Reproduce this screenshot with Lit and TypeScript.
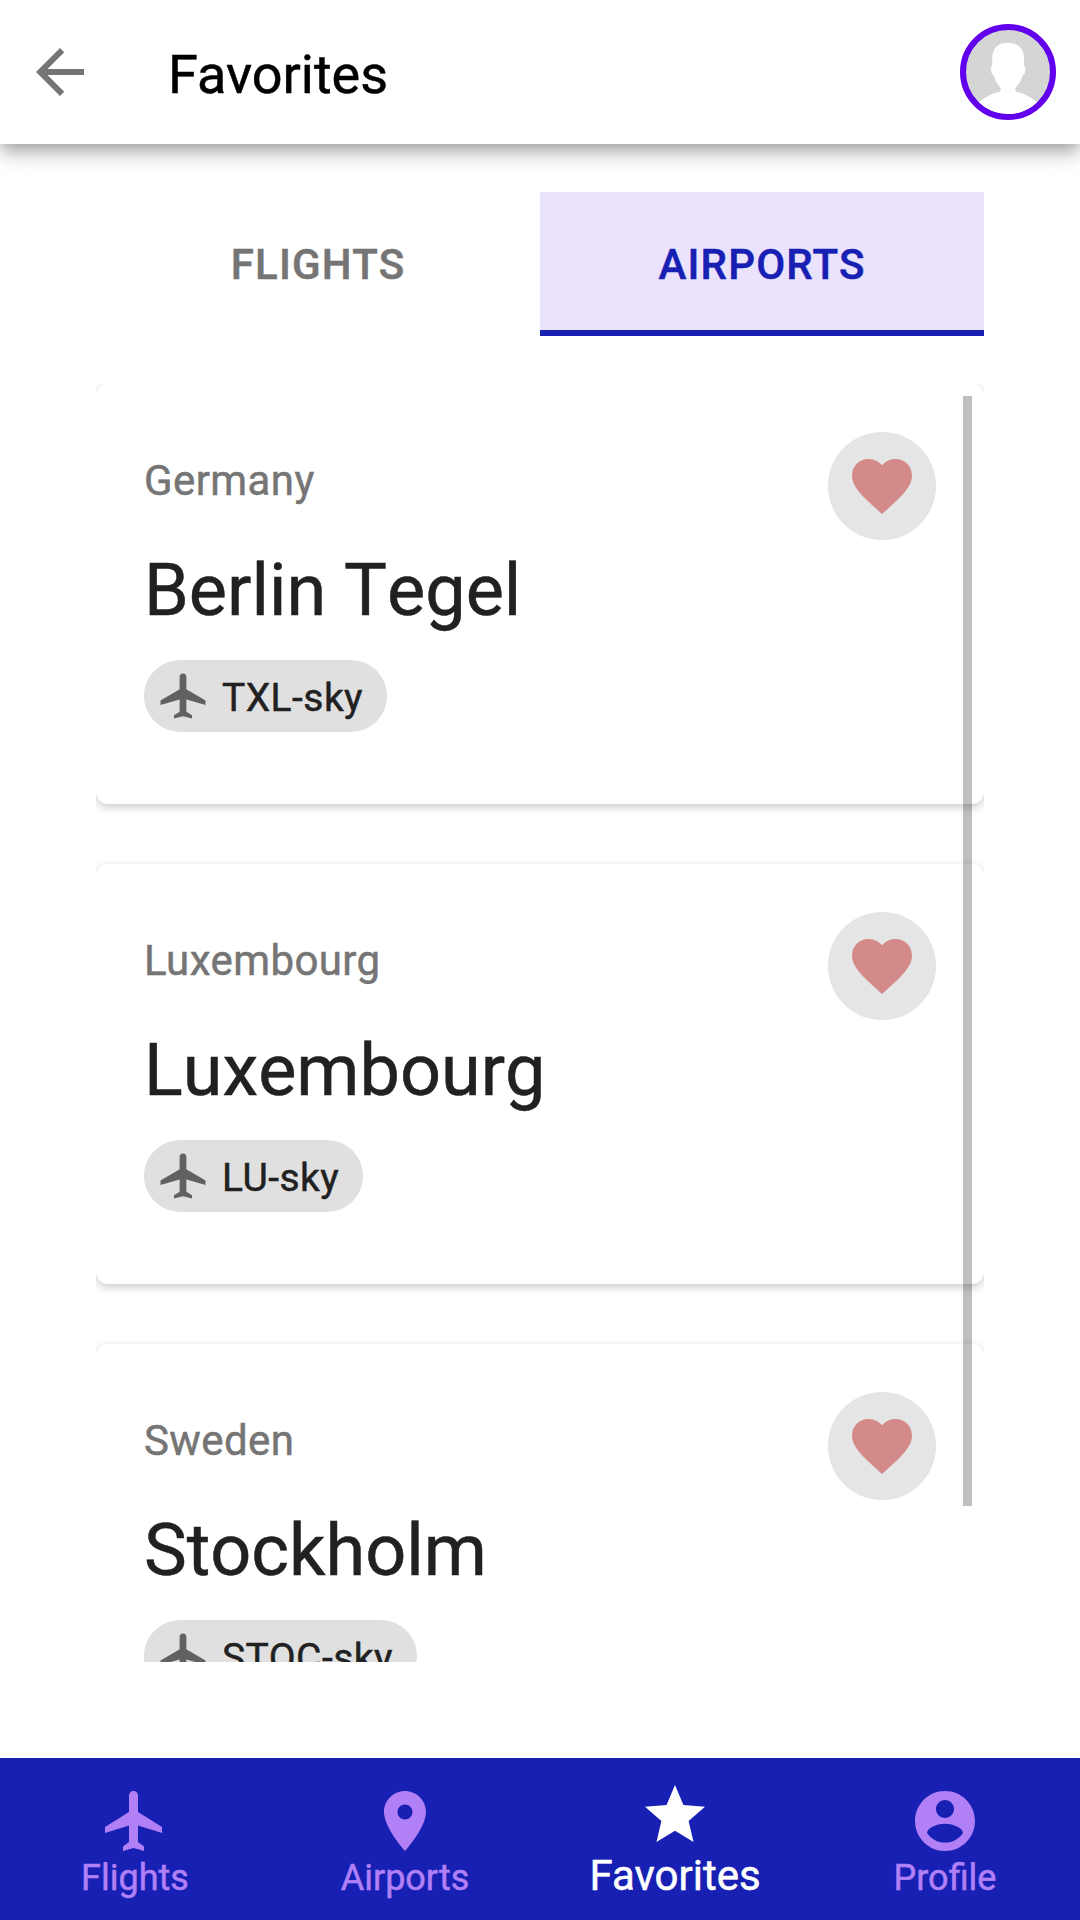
import { LitElement, html, css, svg } from "lit";
import { customElement, property } from "lit/decorators.js";
import { classMap } from "lit/directives/class-map.js";

const icons: Record<string, string> = {
  back: "M20 11H7.83l5.59-5.59L12 4l-8 8 8 8 1.41-1.41L7.83 13H20v-2z",
  flight:
    "M21 16v-2l-8-5V3.5c0-.83-.67-1.5-1.5-1.5S10 2.67 10 3.5V9l-8 5v2l8-2.5V19l-2 1.5V22l3.5-1 3.5 1v-1.5L13 19v-5.5l8 2.5z",
  plane:
    "M22 16v-2l-8.5-5V3.5c0-.83-.67-1.5-1.5-1.5s-1.5.67-1.5 1.5V9L2 14v2l8.5-2.5V19L8 20.5V22l4-1 4 1v-1.5L13.5 19v-5.5L22 16z",
  place:
    "M12 2C8.13 2 5 5.13 5 9c0 5.25 7 13 7 13s7-7.75 7-13c0-3.87-3.13-7-7-7zm0 9.5c-1.38 0-2.5-1.12-2.5-2.5s1.12-2.5 2.5-2.5 2.5 1.12 2.5 2.5-1.12 2.5-2.5 2.5z",
  star:
    "M12 17.27L18.18 21l-1.64-7.03L22 9.24l-7.19-.61L12 2 9.19 8.63 2 9.24l5.46 4.73L5.82 21z",
  account:
    "M12 2C6.48 2 2 6.48 2 12s4.48 10 10 10 10-4.48 10-10S17.52 2 12 2zm0 3c1.66 0 3 1.34 3 3s-1.34 3-3 3-3-1.34-3-3 1.34-3 3-3zm0 14.2c-2.5 0-4.71-1.28-6-3.22.03-1.99 4-3.08 6-3.08 1.99 0 5.97 1.09 6 3.08-1.29 1.94-3.5 3.22-6 3.22z",
  heart:
    "M12 21.35l-1.45-1.32C5.4 15.36 2 12.28 2 8.5 2 5.42 4.42 3 7.5 3c1.74 0 3.41.81 4.5 2.09C13.09 3.81 14.76 3 16.5 3 19.58 3 22 5.42 22 8.5c0 3.78-3.4 6.86-8.55 11.54L12 21.35z",
};

@customElement("md-icon")
export class MdIcon extends LitElement {
  static styles = css`
    :host { display: block; width: 72px; height: 72px; flex: none; }
    .glyph { display: block; width: 100%; height: 100%; fill: currentColor; }
  `;
  @property() name = "";
  render() {
    return html`<svg class="glyph" viewBox="0 0 24 24" aria-hidden="true">
      ${svg`<path d=${icons[this.name] ?? ""}></path>`}
    </svg>`;
  }
}

@customElement("airport-card")
export class AirportCard extends LitElement {
  static styles = css`
    :host { display: block; flex: none; }
    .card {
      box-sizing: border-box;
      height: 420px;
      padding: 48px;
      display: flex;
      justify-content: space-between;
      align-items: flex-start;
      background: #fff;
      border-radius: 12px;
      box-shadow: 0 3px 10px rgba(0, 0, 0, 0.22);
    }
    .info { display: flex; flex-direction: column; align-items: flex-start; }
    .country {
      margin-top: 19px;
      font-size: 42px;
      line-height: 60px;
      letter-spacing: 0.0095em;
      color: #757575;
    }
    .name { margin-top: 32px; font-size: 72px; line-height: 96px; font-kerning: none; color: #212121; }
    .chip {
      margin-top: 21px;
      display: flex;
      align-items: center;
      height: 72px;
      border-radius: 36px;
      background: #e0e0e0;
      color: #212121;
      font-size: 39px;
      letter-spacing: 0.45px;
    }
    .chip-icon { width: 54px; height: 54px; margin: 0 -12px 0 12px; color: #616161; }
    .chip-label { padding: 3px 24px 0; }
    .like {
      width: 108px;
      height: 108px;
      display: flex;
      align-items: center;
      justify-content: center;
      border-radius: 50%;
      background: #e5e5e5;
      color: #d48a88;
    }
  `;
  @property() country = "";
  @property() name = "";
  @property() code = "";
  render() {
    return html`<article class="card">
      <div class="info">
        <div class="country">${this.country}</div>
        <div class="name">${this.name}</div>
        <div class="chip">
          <md-icon class="chip-icon" name="plane"></md-icon>
          <span class="chip-label">${this.code}</span>
        </div>
      </div>
      <div class="like"><md-icon name="heart"></md-icon></div>
    </article>`;
  }
}

@customElement("app-root")
export class AppRoot extends LitElement {
  static styles = css`
    :host {
      display: flex;
      flex-direction: column;
      width: 1080px;
      height: 1920px;
      overflow: hidden;
      background: #fff;
      font-family: Roboto, "Liberation Sans", sans-serif;
      -webkit-text-stroke: 0.5px currentColor;
    }
    .header {
      box-sizing: border-box;
      height: 144px;
      flex: none;
      padding: 0 24px;
      display: flex;
      align-items: center;
      background: #fff;
      box-shadow: 0 6px 12px -3px rgba(0, 0, 0, 0.2), 0 12px 15px 0 rgba(0, 0, 0, 0.14),
        0 3px 30px 0 rgba(0, 0, 0, 0.12);
    }
    .back { color: #757575; }
    .title { flex: 1; margin-left: 72px; padding-top: 5px; font-size: 54px; line-height: 72px; color: #000; }
    .avatar {
      box-sizing: border-box;
      width: 96px;
      height: 96px;
      border: 6px solid #6200ee;
      border-radius: 50%;
      overflow: hidden;
      background: #d5d5d5;
    }
    .portrait { display: block; width: 84px; height: 84px; fill: #fff; }
    .main { flex: 1; min-height: 0; padding: 48px 96px 96px; display: flex; flex-direction: column; gap: 48px; }
    .tabs { display: grid; grid-template-columns: 1fr 1fr; height: 144px; flex: none; }
    .tab {
      display: flex;
      align-items: center;
      justify-content: center;
      font-size: 42px;
      font-weight: 500;
      letter-spacing: 0.02857em;
      color: #757575;
    }
    .tab.active { color: #1720b3; background: #ebe2fe; box-shadow: inset 0 -6px #1720b3; }
    .list {
      flex: 1;
      min-height: 0;
      position: relative;
      display: flex;
      flex-direction: column;
      gap: 60px;
      overflow: hidden;
    }
    .thumb {
      position: absolute;
      top: 12px;
      right: 12px;
      width: 9px;
      height: 1110px;
      background: rgba(0, 0, 0, 0.25);
    }
    .nav { height: 162px; flex: none; display: grid; grid-template-columns: repeat(4, 1fr); background: #1720b3; }
    .item {
      padding-top: 27px;
      display: flex;
      flex-direction: column;
      align-items: center;
      gap: 3px;
      font-size: 36px;
      line-height: 36px;
      color: #b180f6;
    }
    .item.active { padding-top: 21px; gap: 4px; font-size: 42px; line-height: 42px; color: #fff; }
  `;

  private airports = [
    { country: "Germany", name: "Berlin Tegel", code: "TXL-sky" },
    { country: "Luxembourg", name: "Luxembourg", code: "LU-sky" },
    { country: "Sweden", name: "Stockholm", code: "STOC-sky" },
  ];
  private nav = [
    { icon: "flight", label: "Flights" },
    { icon: "place", label: "Airports" },
    { icon: "star", label: "Favorites" },
    { icon: "account", label: "Profile" },
  ];

  render() {
    return html`
      <header class="header">
        <md-icon class="back" name="back"></md-icon>
        <div class="title">Favorites</div>
        <div class="avatar">
          <svg class="portrait" viewBox="0 0 84 84" aria-hidden="true">
            <path
              d="M42 12.7C32 12.700 26.200 18.500 26.200 28v7.500c-1.900.7-1.700 9.300 1.800 10C29 51 32 55 34.500 58c.9 2 .2 3.300-1.500 4C24 64 18 68 12 73v11h60V73C66 68 60 64 51 62c-1.700-.7-2.400-2-1.500-4C52 55 55.500 51 56.500 45.500c3.300-.7 3.400-9.300 1.500-10V28C58 18.500 52 12.700 42 12.700z"
            ></path>
          </svg>
        </div>
      </header>
      <main class="main">
        <div class="tabs">
          <div class="tab">FLIGHTS</div>
          <div class="tab active">AIRPORTS</div>
        </div>
        <div class="list">
          ${this.airports.map(
            (a) => html`<airport-card .country=${a.country} .name=${a.name} .code=${a.code}></airport-card>`
          )}
          <div class="thumb"></div>
        </div>
      </main>
      <nav class="nav">
        ${this.nav.map(
          (n) => html`<div class=${classMap({ item: true, active: n.label === "Favorites" })}>
            <md-icon name=${n.icon}></md-icon>
            <span>${n.label}</span>
          </div>`
        )}
      </nav>
    `;
  }
}
